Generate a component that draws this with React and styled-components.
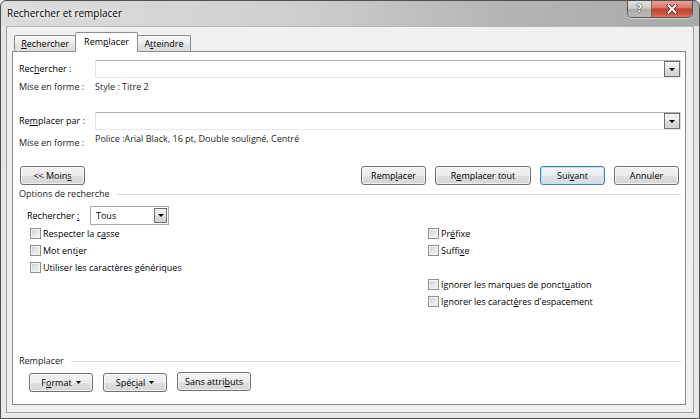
import React from 'react';
import styled, { createGlobalStyle, css } from 'styled-components';

const GlobalStyle = createGlobalStyle`
  *, *::before, *::after { box-sizing: border-box; }
  html, body { margin: 0; padding: 0; background: #fff; }
  body {
    font-family: "Open Sans", "Liberation Sans", sans-serif;
    font-size: 9px;
    color: #000;
  }
  #root { width: 700px; height: 419px; }
`;

const Window = styled.div`
  width: 700px;
  height: 419px;
  border: 1px solid #4f4f4f;
  border-radius: 6px 6px 0 0;
  overflow: hidden;
  display: flex;
  flex-direction: column;
  background:
    linear-gradient(to bottom, transparent 25px, #e4e4e4 25px, #e9e9e9 100%),
    linear-gradient(to right, #dcdcdc 0%, #d0d0d0 40%, #b4b4b4 72%, #a9a9a9 100%);
`;

const TitleBar = styled.div`
  height: 25px;
  flex: none;
  display: flex;
  align-items: flex-start;
  justify-content: space-between;
  padding: 0 6px 0 6px;
`;

const Title = styled.div`
  line-height: 25px;
  font-size: 10px;
  color: #000;
  text-shadow: 0 0 6px rgba(255, 255, 255, 0.95), 0 0 3px rgba(255, 255, 255, 0.9);
`;

const CaptionGroup = styled.div`
  display: flex;
  height: 17px;
  border: 1px solid #555;
  border-top: none;
  border-radius: 0 0 5px 5px;
  overflow: hidden;
  box-shadow: 0 1px 0 rgba(255, 255, 255, 0.5);
`;

const CaptionButton = styled.div`
  display: flex;
  align-items: center;
  justify-content: center;
  width: ${(p) => p.$w}px;
  ${(p) =>
    p.$close
      ? css`
          background: linear-gradient(#e8a798 0%, #d9786a 42%, #c3412e 50%, #cf5140 80%, #e07a62 100%);
        `
      : css`
          border-right: 1px solid #6a6a6a;
          background: linear-gradient(#e2e2e2 0%, #cbcbcb 45%, #acacac 52%, #b8b8b8 100%);
        `}
`;

const HelpGlyph = styled.span`
  font-family: "DejaVu Sans", sans-serif;
  font-weight: bold;
  font-size: 10px;
  line-height: 10px;
  color: #fff;
  text-shadow: 0 0 1px #333, 0 0 1px #333, 0 0 1px #333;
`;

const Client = styled.div`
  flex: 1;
  min-height: 0;
  margin: 0 5px 5px;
  border: 1px solid #9f9f9f;
  border-top-color: #b7b7b7;
  background: #f0f0f0;
  padding: 5px 7px 7px 5px;
  display: flex;
  flex-direction: column;
`;

const TabStrip = styled.div`
  height: 19px;
  flex: none;
  display: flex;
  align-items: flex-end;
  padding-left: 2px;
`;

const Tab = styled.div`
  position: relative;
  width: ${(p) => p.$w}px;
  height: 16px;
  margin-left: ${(p) => (p.$first ? 0 : -1)}px;
  border: 1px solid #898c95;
  border-bottom: none;
  border-radius: 2px 2px 0 0;
  display: flex;
  align-items: center;
  justify-content: center;
  line-height: 12px;
  background: linear-gradient(#f7f7f7 0%, #ececec 50%, #e3e3e3 51%, #dedede 100%);
  ${(p) =>
    p.$active &&
    css`
      z-index: 1;
      height: 20px;
      margin-bottom: -1px;
      padding-bottom: 2px;
      background: #fff;
    `}
`;

const Panel = styled.div`
  flex: 1;
  min-height: 0;
  border: 1px solid #898c95;
  background: #fff;
  padding: 0 4px 12px 6px;
  display: flex;
  flex-direction: column;
`;

const Key = styled.u`
  text-decoration: underline;
  text-underline-offset: 1px;
`;

const FieldRow = styled.div`
  display: flex;
  align-items: center;
  margin-top: ${(p) => p.$mt}px;
`;

const FieldLabel = styled.div`
  width: 76px;
  flex: none;
  line-height: 12px;
`;

const TextBox = styled.div`
  flex: 1;
  height: 18px;
  border: 1px solid;
  border-color: #abadb3 #dbdfe6 #e3e9ef #e2e3ea;
  background: #fff;
  display: flex;
  justify-content: flex-end;
`;

const DropButton = styled.div`
  width: ${(p) => p.$w}px;
  height: 100%;
  border: 1px solid #6f6f6f;
  background: linear-gradient(#f4f4f4 0%, #e8e8e8 50%, #dcdcdc 51%, #d2d2d2 100%);
  display: flex;
  align-items: center;
  justify-content: center;
`;

const InfoRow = styled.div`
  display: flex;
  align-items: flex-start;
  margin-top: ${(p) => p.$mt}px;
  line-height: 12px;
`;

const InfoLabel = styled.div`
  width: 76px;
  flex: none;
  padding-top: ${(p) => p.$pt || 0}px;
  color: #1e1e1e;
`;

const InfoValue = styled.div`
  color: #1e1e1e;
`;

const ButtonRow = styled.div`
  display: flex;
  align-items: center;
  gap: 9px;
  margin-top: ${(p) => p.$mt}px;
  padding: 0 2px 0 1px;
`;

const Spacer = styled.div`
  flex: 1;
`;

const Button = styled.div`
  width: ${(p) => p.$w}px;
  height: 19px;
  border: 1px solid #707070;
  border-radius: 3px;
  background: linear-gradient(#f3f3f3 0%, #ececec 50%, #e0e0e0 51%, #d4d4d4 100%);
  box-shadow: inset 0 0 0 1px rgba(255, 255, 255, 0.65);
  display: flex;
  align-items: center;
  justify-content: center;
  gap: 4px;
  line-height: 12px;
  color: #000;
  margin-top: ${(p) => p.$mt || 0}px;
  ${(p) =>
    p.$default &&
    css`
      border-color: #3c7fb1;
      background: linear-gradient(#f2f6f9 0%, #eaeef1 50%, #dde3e7 51%, #d6dde2 100%);
      box-shadow: inset 0 0 0 1px #c2e2f6;
    `}
`;

const GroupHeader = styled.div`
  display: flex;
  align-items: center;
  gap: 7px;
  line-height: 12px;
  margin-top: ${(p) => p.$mt}px;
  color: #1e3287;
  color: #1a1a1a;
`;

const GroupLine = styled.div`
  flex: 1;
  height: 1px;
  background: #d5dfe5;
`;

const GroupBody = styled.div`
  padding-left: ${(p) => p.$pl}px;
`;

const SearchInRow = styled.div`
  display: flex;
  align-items: center;
  margin-top: 6px;
`;

const SearchInLabel = styled.div`
  width: 63px;
  line-height: 12px;
`;

const Combo = styled.div`
  width: 79px;
  height: 19px;
  border: 1px solid #a9a9a9;
  background: #fff;
  display: flex;
  align-items: stretch;
  padding: 1px;
`;

const ComboText = styled.div`
  flex: 1;
  padding-left: 4px;
  line-height: 15px;
`;

const CheckColumns = styled.div`
  display: grid;
  grid-template-columns: 401px 1fr;
`;

const CheckList = styled.div`
  display: flex;
  flex-direction: column;
  padding-left: ${(p) => p.$pl || 0}px;
`;

const CheckRow = styled.div`
  height: 17px;
  display: flex;
  align-items: center;
  line-height: 12px;
`;

const Box = styled.span`
  width: 11px;
  height: 11px;
  margin-right: 2px;
  border: 1px solid #8e8f8f;
  background: linear-gradient(135deg, #c9cbcd 0%, #e4e5e6 50%, #f6f6f6 100%);
  box-shadow: inset 0 0 0 1px #f4f4f4;
  flex: none;
`;

const BlankRow = styled.div`
  height: 17px;
`;

const BottomGroup = styled.div`
  margin-top: auto;
`;

const BottomButtons = styled.div`
  display: flex;
  align-items: flex-start;
  margin-top: 6px;
  padding-left: 10px;
  gap: 10px;
`;

const Arrow = ({ w = 5, h = 3 }) => (
  <svg width={w} height={h} viewBox={`0 0 ${w} ${h}`}>
    <polygon points={`0,0 ${w},0 ${w / 2},${h}`} fill="#000" />
  </svg>
);

const CloseGlyph = () => (
  <svg width="12" height="10" viewBox="0 0 12 10">
    <path d="M2.5 1.5 L9.5 8.5 M9.5 1.5 L2.5 8.5" stroke="#6b2418" strokeWidth="3.6" strokeLinecap="square" />
    <path d="M2.5 1.5 L9.5 8.5 M9.5 1.5 L2.5 8.5" stroke="#fff" strokeWidth="2" strokeLinecap="square" />
  </svg>
);

const Check = ({ children }) => (
  <CheckRow>
    <Box />
    <span>{children}</span>
  </CheckRow>
);

export default function App() {
  return (
    <>
      <GlobalStyle />
      <Window>
        <TitleBar>
          <Title>Rechercher et remplacer</Title>
          <CaptionGroup>
            <CaptionButton $w={24}>
              <HelpGlyph>?</HelpGlyph>
            </CaptionButton>
            <CaptionButton $w={40} $close>
              <CloseGlyph />
            </CaptionButton>
          </CaptionGroup>
        </TitleBar>
        <Client>
          <TabStrip>
            <Tab $w={62} $first>
              <span><Key>R</Key>echercher</span>
            </Tab>
            <Tab $w={63} $active>
              <span>Rem<Key>p</Key>lacer</span>
            </Tab>
            <Tab $w={54}>
              <span>A<Key>t</Key>teindre</span>
            </Tab>
          </TabStrip>
          <Panel>
            <FieldRow $mt={8}>
              <FieldLabel>Rec<Key>h</Key>ercher :</FieldLabel>
              <TextBox>
                <DropButton $w={16}>
                  <Arrow w={6} h={3} />
                </DropButton>
              </TextBox>
            </FieldRow>
            <InfoRow $mt={3}>
              <InfoLabel>Mise en forme :</InfoLabel>
              <InfoValue>Style : Titre 2</InfoValue>
            </InfoRow>
            <FieldRow $mt={19}>
              <FieldLabel>Re<Key>m</Key>placer par :</FieldLabel>
              <TextBox>
                <DropButton $w={16}>
                  <Arrow w={6} h={3} />
                </DropButton>
              </TextBox>
            </FieldRow>
            <InfoRow $mt={3}>
              <InfoLabel $pt={4}>Mise en forme :</InfoLabel>
              <InfoValue>Police :Arial Black, 16 pt, Double souligné, Centré</InfoValue>
            </InfoRow>
            <ButtonRow $mt={17}>
              <Button $w={65}>
                <span>&lt;&lt; Moin<Key>s</Key></span>
              </Button>
              <Spacer />
              <Button $w={65}>
                <span>Remp<Key>l</Key>acer</span>
              </Button>
              <Button $w={96}>
                <span>R<Key>e</Key>mplacer tout</span>
              </Button>
              <Button $w={65} $default>
                <span>Sui<Key>v</Key>ant</span>
              </Button>
              <Button $w={65}>
                <span>Annuler</span>
              </Button>
            </ButtonRow>
            <GroupHeader $mt={3}>
              <span>Options de recherche</span>
              <GroupLine />
            </GroupHeader>
            <GroupBody $pl={8}>
              <SearchInRow>
                <SearchInLabel>Rechercher <Key>:</Key></SearchInLabel>
                <Combo>
                  <ComboText>Tous</ComboText>
                  <DropButton $w={13}>
                    <Arrow w={6} h={3} />
                  </DropButton>
                </Combo>
              </SearchInRow>
              <CheckColumns>
                <CheckList $pl={3}>
                  <Check>Respecter la c<Key>a</Key>sse</Check>
                  <Check>Mot ent<Key>i</Key>er</Check>
                  <Check>Utiliser les caractères <Key>g</Key>énériques</Check>
                </CheckList>
                <CheckList>
                  <Check>Pr<Key>é</Key>fixe</Check>
                  <Check>Suffi<Key>x</Key>e</Check>
                  <BlankRow />
                  <Check>Ignorer les marques de ponct<Key>u</Key>ation</Check>
                  <Check>Ignorer les caract<Key>è</Key>res d'espacement</Check>
                </CheckList>
              </CheckColumns>
            </GroupBody>
            <BottomGroup>
              <GroupHeader $mt={0}>
                <span>Remplacer</span>
                <GroupLine />
              </GroupHeader>
              <BottomButtons>
                <Button $w={64}>
                  <span>F<Key>o</Key>rmat</span>
                  <Arrow w={5} h={3} />
                </Button>
                <Button $w={64}>
                  <span>Spéc<Key>i</Key>al</span>
                  <Arrow w={5} h={3} />
                </Button>
                <Button $w={74} $mt={-1}>
                  <span>Sans attri<Key>b</Key>uts</span>
                </Button>
              </BottomButtons>
            </BottomGroup>
          </Panel>
        </Client>
      </Window>
    </>
  );
}
